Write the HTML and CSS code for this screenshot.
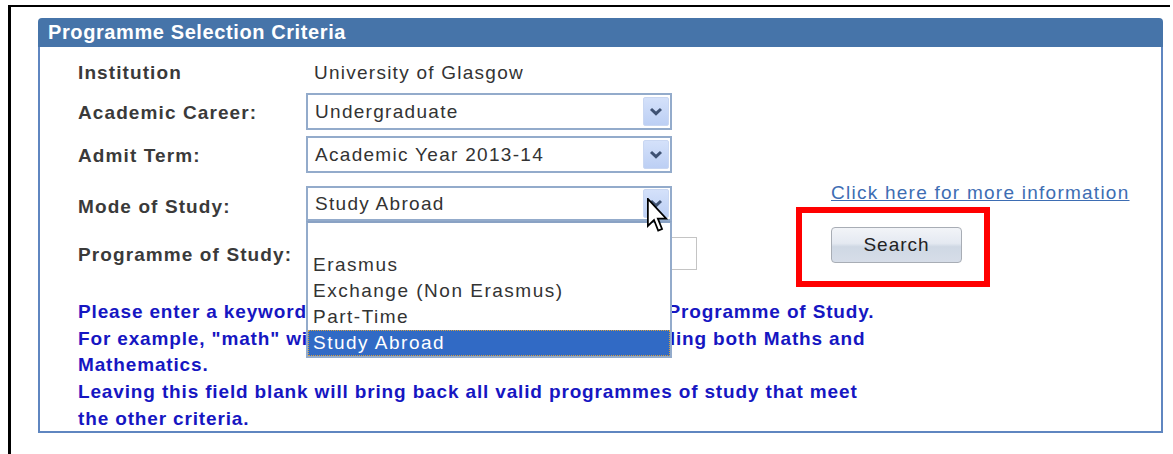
FILE: index.html
```html
<!DOCTYPE html>
<html lang="en">
<head>
<meta charset="utf-8">
<title>Programme Selection Criteria</title>
<link rel="stylesheet" href="styles.css">
</head>
<body>
<div class="frame">
  <section class="panel">
    <h2 class="panel-head">Programme Selection Criteria</h2>
    <div class="panel-body">
      <div class="form-area">
        <div class="form">
          <div class="form-row row-inst">
            <div class="label">Institution</div>
            <div class="value">University of Glasgow</div>
          </div>

          <div class="form-row row-career">
            <div class="label">Academic Career:</div>
            <div class="select">
              <span class="select-text">Undergraduate</span>
              <span class="select-btn"><svg viewBox="0 0 14 9" width="14" height="9"><polyline points="2,2 7,6.6 12,2" fill="none" stroke="#3f5273" stroke-width="3"/></svg></span>
            </div>
          </div>

          <div class="form-row row-term">
            <div class="label">Admit Term:</div>
            <div class="select">
              <span class="select-text">Academic Year 2013-14</span>
              <span class="select-btn"><svg viewBox="0 0 14 9" width="14" height="9"><polyline points="2,2 7,6.6 12,2" fill="none" stroke="#3f5273" stroke-width="3"/></svg></span>
            </div>
          </div>

          <div class="form-row row-mode">
            <div class="label">Mode of Study:</div>
            <div class="select open">
              <span class="select-text">Study Abroad</span>
              <span class="select-btn"><svg viewBox="0 0 14 9" width="14" height="9"><polyline points="2,2 7,6.6 12,2" fill="none" stroke="#3f5273" stroke-width="3"/></svg></span>
              <ul class="options">
                <li class="opt">&nbsp;</li>
                <li class="opt">Erasmus</li>
                <li class="opt">Exchange (Non Erasmus)</li>
                <li class="opt">Part-Time</li>
                <li class="opt selected">Study Abroad</li>
              </ul>
              <svg class="cursor" viewBox="0 0 12 20" width="21" height="35">
                <path d="M0.5,0.5 L0.5,16 L4,12.6 L6.4,18.6 L8.6,17.7 L6.2,11.8 L11,11.8 Z" fill="#fff" stroke="#000" stroke-width="1"/>
              </svg>
            </div>
          </div>

          <div class="form-row row-prog">
            <div class="label">Programme of Study:</div>
            <span class="text-input"></span>
          </div>
        </div>

        <div class="side">
          <a class="more-link" href="#">Click here for more information</a>
          <div class="search-wrap">
            <button class="search-btn" type="button">Search</button>
            <span class="callout"></span>
          </div>
        </div>
      </div>

      <p class="help">
        Please enter a keyword or part of a keyword to search for a Programme of Study.<br>
        For example, "math" will return all of the programmes including both Maths and<br>
        Mathematics.<br>
        Leaving this field blank will bring back all valid programmes of study that meet<br>
        the other criteria.
      </p>
    </div>
  </section>
</div>
</body>
</html>
```

FILE: styles.css
```css
* { box-sizing: border-box; }

html, body {
  margin: 0;
  padding: 0;
  background: #fff;
}

body {
  font-family: "Liberation Sans", Arial, sans-serif;
  color: #333;
  width: 1173px;
  height: 454px;
  overflow: hidden;
}

.frame {
  margin: 5px 0 0 8px;
  width: 1162px;
  height: 449px;
  border-top: 2px solid #000;
  border-left: 3px solid #000;
  padding: 11px 0 0 27px;
}

.panel {
  width: 1125px;
}

.panel-head {
  margin: 0;
  height: 29px;
  background: #4674a9;
  border-radius: 4px 4px 0 0;
  color: #fff;
  font-size: 20px;
  font-weight: bold;
  line-height: 29px;
  padding-left: 10px;
  letter-spacing: 0.6px;
}

.panel-body {
  height: 386px;
  border: 2px solid #5f86c0;
  border-top: none;
  padding: 11px 0 0 38px;
}

.form-area {
  display: flex;
}

/* form rows */
.form {
  display: flex;
  flex-direction: column;
}

.form-row {
  display: flex;
  align-items: center;
}

.row-inst { height: 30px; }
.row-career { margin-top: 5px; height: 37px; }
.row-term { margin-top: 6px; height: 37px; }
.row-mode { margin-top: 13px; height: 35px; }
.row-prog { margin-top: 16px; height: 33px; }

.label {
  width: 228px;
  padding-top: 3px;
  font-weight: bold;
  font-size: 19px;
  letter-spacing: 1.1px;
  color: #3a3a3a;
}

.row-inst .label { padding-top: 0; }
.row-mode .label { padding-top: 6px; }

.value {
  font-size: 19px;
  letter-spacing: 1.25px;
  color: #333;
  padding-left: 8px;
}

/* drop-down fields */
.select {
  position: relative;
  width: 366px;
  height: 100%;
  border: 2px solid #93abcb;
  background: #fff;
  display: flex;
  align-items: center;
  padding-left: 7px;
}

.select-text {
  flex: 1;
  font-size: 19px;
  letter-spacing: 1.3px;
  color: #333;
}

.select-btn {
  width: 26px;
  height: 29px;
  margin-right: 1px;
  border-radius: 2px;
  background: linear-gradient(#d4e1fa, #bccff4);
  border: 1px solid #c9d7f2;
  display: flex;
  align-items: center;
  justify-content: center;
}

.options {
  position: absolute;
  left: -2px;
  top: 33px;
  width: 366px;
  margin: 0;
  padding: 3px 0 0 0;
  list-style: none;
  background: #fff;
  border: 2px solid #93abcb;
  border-top-color: #8aa2c4;
  z-index: 5;
}

.opt {
  height: 26px;
  line-height: 26px;
  padding-left: 5px;
  font-size: 19px;
  letter-spacing: 1.5px;
  color: #333;
}

.opt.selected {
  background: #316ac5;
  color: #fff;
  outline: 1px dotted #d8a040;
  outline-offset: -1px;
}

.cursor {
  position: absolute;
  left: 339px;
  top: 10px;
  z-index: 6;
}

.text-input {
  display: block;
  width: 391px;
  height: 33px;
  border: 1px solid #c4c4c4;
  background: #fff;
}

/* right-hand column */
.side {
  margin-left: 134px;
  padding-top: 124px;
  display: flex;
  flex-direction: column;
  align-items: flex-start;
}

.more-link {
  font-size: 19px;
  letter-spacing: 1.25px;
  color: #3d6db3;
  text-decoration: underline;
  line-height: 22px;
}

.search-wrap {
  position: relative;
  margin-top: 23px;
}

.search-btn {
  width: 131px;
  height: 36px;
  border: 1px solid #a8adb5;
  border-radius: 4px;
  background: linear-gradient(#f2f4f8 0%, #e4e9f1 45%, #cfd8e4 55%, #d6dde8 100%);
  font-family: "Liberation Sans", Arial, sans-serif;
  font-size: 19px;
  letter-spacing: 1px;
  color: #222;
  padding: 0;
}

.callout {
  position: absolute;
  left: -35px;
  top: -20px;
  width: 194px;
  height: 80px;
  border: 6px solid #f00;
  pointer-events: none;
}

/* help text */
.help {
  margin: 29px 0 0 0;
  font-size: 19px;
  font-weight: bold;
  line-height: 26.7px;
  letter-spacing: 0.85px;
  color: #1616c2;
}
```
